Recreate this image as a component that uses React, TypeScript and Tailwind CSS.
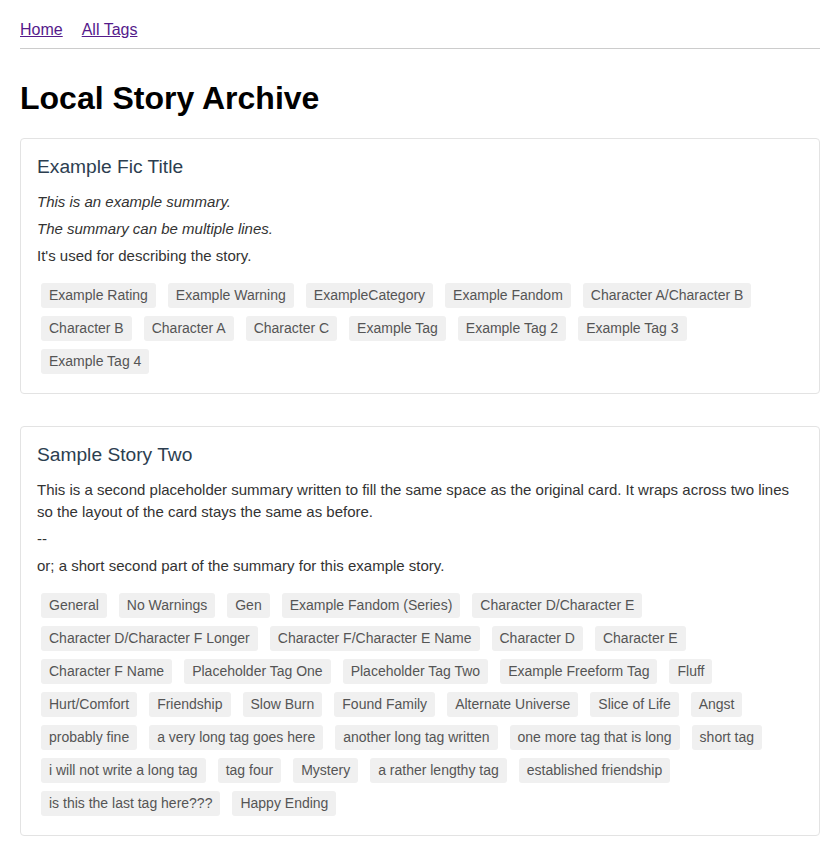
import React from 'react'

interface Story {
  title: string
  summary: { text: string; italic?: boolean }[]
  tags: string[]
}

const stories: Story[] = [
  {
    title: 'Example Fic Title',
    summary: [
      { text: 'This is an example summary.', italic: true },
      { text: 'The summary can be multiple lines.', italic: true },
      { text: "It's used for describing the story." },
    ],
    tags: [
      'Example Rating',
      'Example Warning',
      'ExampleCategory',
      'Example Fandom',
      'Character A/Character B',
      'Character B',
      'Character A',
      'Character C',
      'Example Tag',
      'Example Tag 2',
      'Example Tag 3',
      'Example Tag 4',
    ],
  },
  {
    // placeholder content
    title: 'Sample Story Two',
    summary: [
      {
        text: 'This is a second placeholder summary written to fill the same space as the original card. It wraps across two lines so the layout of the card stays the same as before.',
      },
      { text: '--' },
      { text: 'or; a short second part of the summary for this example story.' },
    ],
    tags: [
      'General',
      'No Warnings',
      'Gen',
      'Example Fandom (Series)',
      'Character D/Character E',
      'Character D/Character F Longer',
      'Character F/Character E Name',
      'Character D',
      'Character E',
      'Character F Name',
      'Placeholder Tag One',
      'Placeholder Tag Two',
      'Example Freeform Tag',
      'Fluff',
      'Hurt/Comfort',
      'Friendship',
      'Slow Burn',
      'Found Family',
      'Alternate Universe',
      'Slice of Life',
      'Angst',
      'probably fine',
      'a very long tag goes here',
      'another long tag written',
      'one more tag that is long',
      'short tag',
      'i will not write a long tag',
      'tag four',
      'Mystery',
      'a rather lengthy tag',
      'established friendship',
      'is this the last tag here???',
      'Happy Ending',
    ],
  },
]

function StoryCard({ story }: { story: Story }) {
  return (
    <div className="mb-[32px] rounded-[4px] border border-[#e3e3e3] p-4">
      <h2 className="mb-[13px] pt-px text-[19.2px] leading-[22px] text-[#2c3e50]">{story.title}</h2>
      <div className="flex flex-col gap-[4.5px]">
        {story.summary.map((s, i) => (
          <p
            key={i}
            className={`text-[15px] leading-[22.5px] text-[#333] ${s.italic ? 'italic' : ''}`}
          >
            {s.text}
          </p>
        ))}
      </div>
      <div className="mt-[11px] flex flex-wrap gap-x-3 gap-y-2 px-1 pt-1 pb-[3px]">
        {story.tags.map((tag) => (
          <span
            key={tag}
            className="rounded-[3px] bg-[#f0f0f0] px-2 py-[3px] text-[14px] leading-[19px] text-[#555]"
          >
            {tag}
          </span>
        ))}
      </div>
    </div>
  )
}

export default function App() {
  return (
    <div className="min-h-screen bg-white px-5 pt-[21px] pb-5 font-['Liberation_Sans',Arial,sans-serif] text-[#333]">
      <nav className="flex gap-[19px] border-b border-[#cccccc] pb-[9px] text-[16px] leading-[18.4px]">
        <a href="#" className="text-[#551a8b] underline">Home</a>
        <a href="#" className="text-[#551a8b] underline">All Tags</a>
      </nav>
      <h1 className="mt-[31px] mb-[21px] text-[32px] font-bold leading-[37px] text-black">
        Local Story Archive
      </h1>
      {stories.map((story) => (
        <StoryCard key={story.title} story={story} />
      ))}
    </div>
  )
}
